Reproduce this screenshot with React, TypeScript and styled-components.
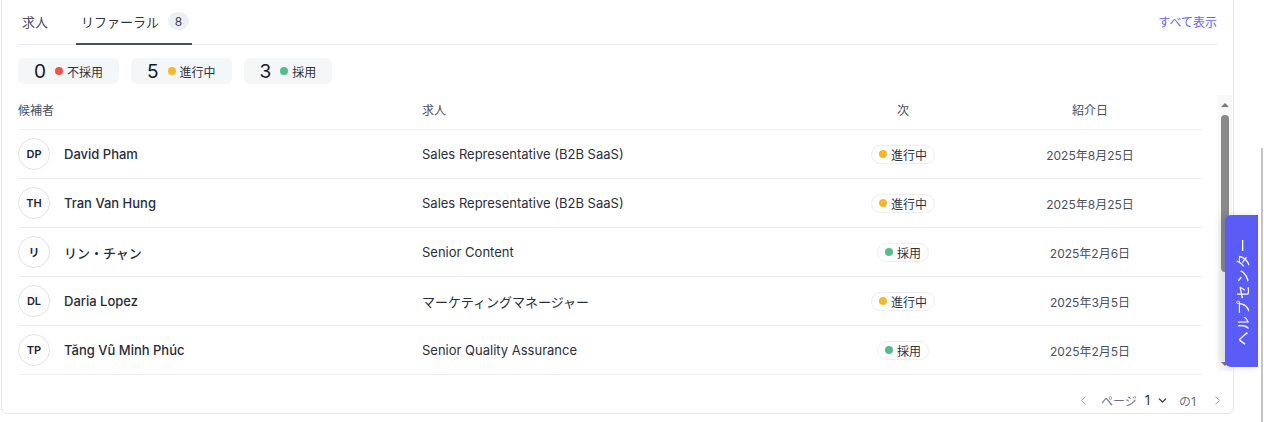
import styled, { createGlobalStyle } from 'styled-components';
import { ChevronLeft, ChevronRight, ChevronDown } from 'lucide-react';

const GlobalStyle = createGlobalStyle`
  html, body {
    margin: 0;
    padding: 0;
    background: #ffffff;
    overflow: hidden;
  }
  body {
    font-family: Inter, "Noto Sans CJK JP", sans-serif;
    color: #1f2937;
  }
`;

const Page = styled.div`
  display: flex;
  align-items: flex-start;
  height: 422px;
`;

const Card = styled.section`
  margin-top: -9px;
  margin-left: 1px;
  width: 1233px;
  box-sizing: border-box;
  border: 1px solid #e5e7eb;
  border-radius: 6px;
  padding: 8px 16px 0 16px;
  background: #fff;
`;

const RightRail = styled.div`
  margin-left: auto;
  margin-right: 1px;
  margin-top: 148px;
  width: 2px;
  height: 274px;
  background: #c4c4c4;
`;

const TabBar = styled.div`
  display: flex;
  align-items: stretch;
  height: 44px;
  border-bottom: 1px solid #e8eaef;
`;

const Tab = styled.div<{ $active?: boolean }>`
  display: flex;
  align-items: center;
  gap: 9px;
  padding: 0 ${(p) => (p.$active ? '3px 0 5px' : '4px')};
  margin-right: ${(p) => (p.$active ? '0' : '24px')};
  font-size: 13px;
  color: ${(p) => (p.$active ? '#30343f' : '#4b5060')};
  border-bottom: 2px solid ${(p) => (p.$active ? '#4a4e5e' : 'transparent')};
  margin-bottom: -1px;
  padding-bottom: 1px;
`;

const CountBadge = styled.span`
  display: inline-flex;
  align-items: center;
  justify-content: center;
  min-width: 21px;
  height: 18px;
  padding: 0 4px;
  box-sizing: border-box;
  border-radius: 9px;
  background: #eceff4;
  color: #3f4452;
  font-size: 12px;
`;

const ViewAll = styled.a`
  margin-left: auto;
  align-self: center;
  margin-top: -2px;
  font-size: 12px;
  color: #6366f1;
  text-decoration: none;
`;

const Stats = styled.div`
  display: flex;
  gap: 12px;
  margin-top: 13px;
`;

const StatChip = styled.div`
  display: flex;
  align-items: center;
  height: 26px;
  padding: 0 16px;
  border-radius: 6px;
  background: #f5f6f8;
`;

const StatNumber = styled.span`
  font-size: 19px;
  color: #141824;
  margin-right: 9px;
`;

const Dot = styled.span<{ $color: string }>`
  width: 8px;
  height: 8px;
  border-radius: 50%;
  background: ${(p) => p.$color};
  margin-right: 4px;
  flex: none;
`;

const StatLabel = styled.span`
  font-size: 12px;
  color: #2d3140;
`;

const TableArea = styled.div`
  display: flex;
  align-items: flex-start;
  gap: 15px;
  margin-top: 11px;
  margin-right: -15px;
`;

const Viewport = styled.div`
  width: 1185px;
  height: 280px;
  overflow: hidden;
`;

const ScrollTrack = styled.div`
  width: 14px;
  height: 276px;
  background: #f8f8f8;
  display: flex;
  flex-direction: column;
  align-items: center;
`;

const Arrow = styled.span<{ $down?: boolean }>`
  width: 0;
  height: 0;
  border-left: 4px solid transparent;
  border-right: 4px solid transparent;
  ${(p) =>
    p.$down
      ? 'border-top: 4px solid #7a7a7a; margin-top: auto; margin-bottom: 5px;'
      : 'border-bottom: 4px solid #7a7a7a; margin-top: 8px;'}
`;

const Thumb = styled.span`
  width: 8px;
  height: 157px;
  margin-top: 8px;
  border-radius: 4px;
  background: #8a8a8a;
`;

const Grid = `
  display: grid;
  grid-template-columns: 404px 407px 148px 226px;
  align-items: center;
  border-bottom: 1px solid #eceef2;
`;

const HeadRow = styled.div`
  ${Grid}
  height: 34px;
  font-size: 12px;
  color: #4b5060;
`;

const HeadCell = styled.div<{ $center?: boolean }>`
  text-align: ${(p) => (p.$center ? 'center' : 'left')};
  margin-top: -5px;
`;

const Row = styled.div`
  ${Grid}
  height: 48px;
`;

const NameCell = styled.div`
  display: flex;
  align-items: center;
  gap: 14px;
`;

const Avatar = styled.span`
  width: 30px;
  height: 30px;
  border-radius: 50%;
  border: 1px solid #dfe3ea;
  display: flex;
  align-items: center;
  justify-content: center;
  font-size: 11px;
  font-weight: 600;
  color: #1c2540;
`;

const Name = styled.span`
  font-size: 13px;
  font-weight: 500;
  color: #2a2d36;
`;

const JobCell = styled.div`
  font-size: 13px;
  color: #2b2f3a;
`;

const StatusCell = styled.div`
  display: flex;
  justify-content: center;
`;

const StatusPill = styled.span`
  display: inline-flex;
  align-items: center;
  height: 19px;
  padding: 0 7px;
  box-sizing: border-box;
  border: 1px solid #eceef2;
  border-radius: 10px;
  font-size: 12px;
  color: #2d3140;
`;

const DateCell = styled.div`
  text-align: center;
  font-size: 12px;
  color: #4b5060;
`;

const Pagination = styled.div`
  display: flex;
  align-items: center;
  justify-content: flex-end;
  box-sizing: border-box;
  height: 38px;
  padding-top: 12px;
  margin-right: -12px;
  font-size: 12px;
  color: #6b7080;
`;

const PageBtn = styled.span`
  display: flex;
  align-items: center;
  color: #a3a8b3;
  padding: 0 4px;
`;

const PageLabel = styled.span`
  margin: 0 8px 0 6px;
`;

const PageSelect = styled.span`
  display: flex;
  align-items: center;
  gap: 6px;
  font-size: 13px;
  color: #30343f;
  margin-right: 10px;
`;

const PageTotal = styled.span`
  margin-right: 10px;
`;

const HelpTab = styled.button`
  position: fixed;
  right: 6px;
  top: 215px;
  width: 33px;
  height: 152px;
  border: none;
  border-radius: 6px 0 0 6px;
  background: #5b5cf5;
  box-shadow: -4px 0 10px rgba(0, 0, 0, 0.12);
  display: flex;
  align-items: center;
  justify-content: center;
  padding: 0;
`;

const HelpText = styled.span`
  writing-mode: vertical-rl;
  text-orientation: sideways;
  transform: rotate(180deg);
  color: #ffffff;
  font-family: Inter, "Noto Sans CJK JP", sans-serif;
  font-size: 14px;
  letter-spacing: 1.5px;
`;

const STATUS = {
  progress: { label: '進行中', color: '#f5b82b' },
  hired: { label: '採用', color: '#55bd8c' },
  rejected: { label: '不採用', color: '#ef5350' },
};

type Status = keyof typeof STATUS;

const rows: { initials: string; name: string; job: string; status: Status; date: string }[] = [
  { initials: 'DP', name: 'David Pham', job: 'Sales Representative (B2B SaaS)', status: 'progress', date: '2025年8月25日' },
  { initials: 'TH', name: 'Tran Van Hung', job: 'Sales Representative (B2B SaaS)', status: 'progress', date: '2025年8月25日' },
  { initials: 'リ', name: 'リン・チャン', job: 'Senior Content', status: 'hired', date: '2025年2月6日' },
  { initials: 'DL', name: 'Daria Lopez', job: 'マーケティングマネージャー', status: 'progress', date: '2025年3月5日' },
  { initials: 'TP', name: 'Tăng Vũ Minh Phúc', job: 'Senior Quality Assurance', status: 'hired', date: '2025年2月5日' },
];

export default function App() {
  return (
    <>
      <GlobalStyle />
      <Page>
        <Card>
          <TabBar>
            <Tab>求人</Tab>
            <Tab $active>
              リファーラル
              <CountBadge>8</CountBadge>
            </Tab>
            <ViewAll href="#">すべて表示</ViewAll>
          </TabBar>

          <Stats>
            <StatChip>
              <StatNumber>0</StatNumber>
              <Dot $color={STATUS.rejected.color} />
              <StatLabel>不採用</StatLabel>
            </StatChip>
            <StatChip>
              <StatNumber>5</StatNumber>
              <Dot $color={STATUS.progress.color} />
              <StatLabel>進行中</StatLabel>
            </StatChip>
            <StatChip>
              <StatNumber>3</StatNumber>
              <Dot $color={STATUS.hired.color} />
              <StatLabel>採用</StatLabel>
            </StatChip>
          </Stats>

          <TableArea>
            <Viewport>
              <HeadRow>
                <HeadCell>候補者</HeadCell>
                <HeadCell>求人</HeadCell>
                <HeadCell $center>次</HeadCell>
                <HeadCell $center>紹介日</HeadCell>
              </HeadRow>
              {rows.map((r) => (
                <Row key={r.name}>
                  <NameCell>
                    <Avatar>{r.initials}</Avatar>
                    <Name>{r.name}</Name>
                  </NameCell>
                  <JobCell>{r.job}</JobCell>
                  <StatusCell>
                    <StatusPill>
                      <Dot $color={STATUS[r.status].color} />
                      {STATUS[r.status].label}
                    </StatusPill>
                  </StatusCell>
                  <DateCell>{r.date}</DateCell>
                </Row>
              ))}
            </Viewport>
            <ScrollTrack>
              <Arrow />
              <Thumb />
              <Arrow $down />
            </ScrollTrack>
          </TableArea>

          <Pagination>
            <PageBtn>
              <ChevronLeft size={15} strokeWidth={1.6} />
            </PageBtn>
            <PageLabel>ページ</PageLabel>
            <PageSelect>
              1
              <ChevronDown size={13} strokeWidth={2.4} />
            </PageSelect>
            <PageTotal>の1</PageTotal>
            <PageBtn>
              <ChevronRight size={15} strokeWidth={1.6} />
            </PageBtn>
          </Pagination>
        </Card>
        <RightRail />
      </Page>
      <HelpTab>
        <HelpText>ヘルプセンター</HelpText>
      </HelpTab>
    </>
  );
}
